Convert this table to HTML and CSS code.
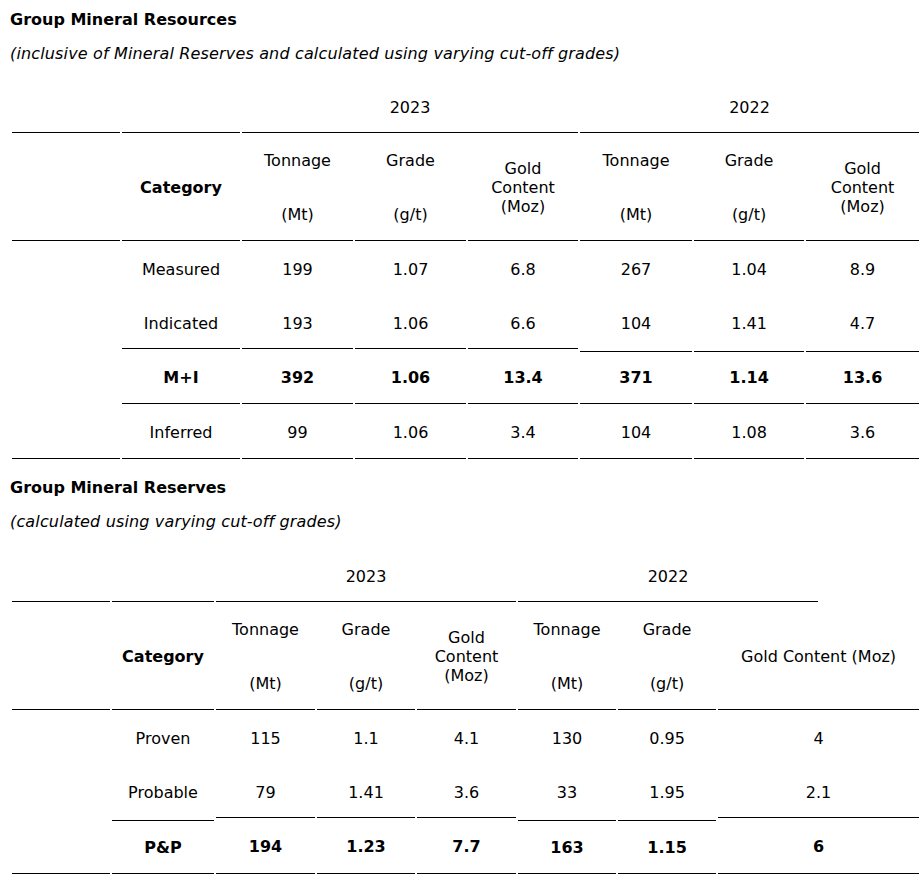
FILE: index.html
```html
<!DOCTYPE html>
<html lang="en">
<head>
<meta charset="utf-8">
<title>Group Mineral Resources and Reserves</title>
<link rel="stylesheet" href="styles.css">
</head>
<body>
<div class="page">
  <p class="title">Group Mineral Resources</p>
  <p class="subtitle">(inclusive of Mineral Reserves and calculated using varying cut-off grades)</p>
  <table class="data t1">
    <colgroup>
      <col class="w108"><col class="w118"><col class="w111"><col class="w111"><col class="w110"><col class="w112"><col class="w110"><col class="w113">
    </colgroup>
    <tr class="r-year">
      <td class="b"></td><td class="b"></td><td class="b" colspan="3">2023</td><td class="b" colspan="3">2022</td>
    </tr>
    <tr class="r-head">
      <td class="b"></td>
      <th class="b">Category</th>
      <td class="b"><div class="stack"><span>Tonnage</span><span>(Mt)</span></div></td>
      <td class="b"><div class="stack"><span>Grade</span><span>(g/t)</span></div></td>
      <td class="b">Gold Content (Moz)</td>
      <td class="b"><div class="stack"><span>Tonnage</span><span>(Mt)</span></div></td>
      <td class="b"><div class="stack"><span>Grade</span><span>(g/t)</span></div></td>
      <td class="b">Gold Content (Moz)</td>
    </tr>
    <tr class="r-53">
      <td class="b" rowspan="4"></td>
      <td>Measured</td><td>199</td><td>1.07</td><td>6.8</td><td>267</td><td>1.04</td><td>8.9</td>
    </tr>
    <tr class="r-51">
      <td class="b">Indicated</td><td class="b">193</td><td class="b">1.06</td><td class="b">6.6</td><td>104</td><td>1.41</td><td>4.7</td>
    </tr>
    <tr class="r-53 total">
      <td class="b">M+I</td><td class="b">392</td><td class="b">1.06</td><td class="b">13.4</td><td class="t b">371</td><td class="t b">1.14</td><td class="t b">13.6</td>
    </tr>
    <tr class="r-53">
      <td class="b">Inferred</td><td class="b">99</td><td class="b">1.06</td><td class="b">3.4</td><td class="b">104</td><td class="b">1.08</td><td class="b">3.6</td>
    </tr>
  </table>

  <p class="title title-2">Group Mineral Reserves</p>
  <p class="subtitle">(calculated using varying cut-off grades)</p>
  <table class="data t2">
    <colgroup>
      <col class="w98"><col class="w102"><col class="w99"><col class="w98"><col class="w99"><col class="w98"><col class="w98"><col class="w100"><col class="w99">
    </colgroup>
    <tr class="r-year">
      <td class="b"></td><td class="b"></td><td class="b" colspan="3">2023</td><td class="b" colspan="3">2022</td><td></td>
    </tr>
    <tr class="r-head">
      <td class="b"></td>
      <th class="b">Category</th>
      <td class="b"><div class="stack"><span>Tonnage</span><span>(Mt)</span></div></td>
      <td class="b"><div class="stack"><span>Grade</span><span>(g/t)</span></div></td>
      <td class="b">Gold Content (Moz)</td>
      <td class="b"><div class="stack"><span>Tonnage</span><span>(Mt)</span></div></td>
      <td class="b"><div class="stack"><span>Grade</span><span>(g/t)</span></div></td>
      <td class="b" colspan="2">Gold Content (Moz)</td>
    </tr>
    <tr class="r-53">
      <td class="b" rowspan="3"></td>
      <td>Proven</td><td>115</td><td>1.1</td><td>4.1</td><td>130</td><td>0.95</td><td colspan="2">4</td>
    </tr>
    <tr class="r-51">
      <td>Probable</td><td class="b">79</td><td class="b">1.41</td><td class="b">3.6</td><td>33</td><td>1.95</td><td class="b" colspan="2">2.1</td>
    </tr>
    <tr class="r-54 total">
      <td class="t b">P&amp;P</td><td class="b">194</td><td class="b">1.23</td><td class="b">7.7</td><td class="t b">163</td><td class="t b">1.15</td><td class="b" colspan="2">6</td>
    </tr>
  </table>
</div>
</body>
</html>
```

FILE: styles.css
```css
html, body {
  margin: 0;
  padding: 0;
  background: #ffffff;
}

.page {
  padding: 10px 0 0 10px;
  font-family: "DejaVu Sans", Verdana, sans-serif;
  font-size: 16px;
  line-height: 19px;
  color: #000000;
}

.title {
  margin: 0;
  font-weight: bold;
}

.title-2 {
  margin-top: 17px;
}

.subtitle {
  margin: 15px 0 0 0;
  font-style: italic;
  letter-spacing: 0.15px;
}

.data {
  border-collapse: separate;
  border-spacing: 2px;
  table-layout: fixed;
  margin-top: 17px;
}

.t1 { width: 911px; }
.t2 { width: 911px; margin-top: 18px; }

.data td,
.data th {
  padding: 0 5px;
  text-align: center;
  vertical-align: middle;
  font-weight: normal;
  border: 0;
}

.data th,
.data .total td {
  font-weight: bold;
}

.data .b { border-bottom: 1px solid #000; }
.data .t { border-top: 1px solid #000; }

.r-year { height: 51px; }
.r-head { height: 106px; }
.r-53 { height: 53px; }
.r-51 { height: 51px; }
.r-54 { height: 54px; }

.stack {
  display: flex;
  flex-direction: column;
  align-items: center;
  gap: 35px;
}

.w98 { width: 98px; }
.w99 { width: 99px; }
.w100 { width: 100px; }
.w102 { width: 102px; }
.w108 { width: 108px; }
.w110 { width: 110px; }
.w111 { width: 111px; }
.w112 { width: 112px; }
.w113 { width: 113px; }
.w118 { width: 118px; }
```
